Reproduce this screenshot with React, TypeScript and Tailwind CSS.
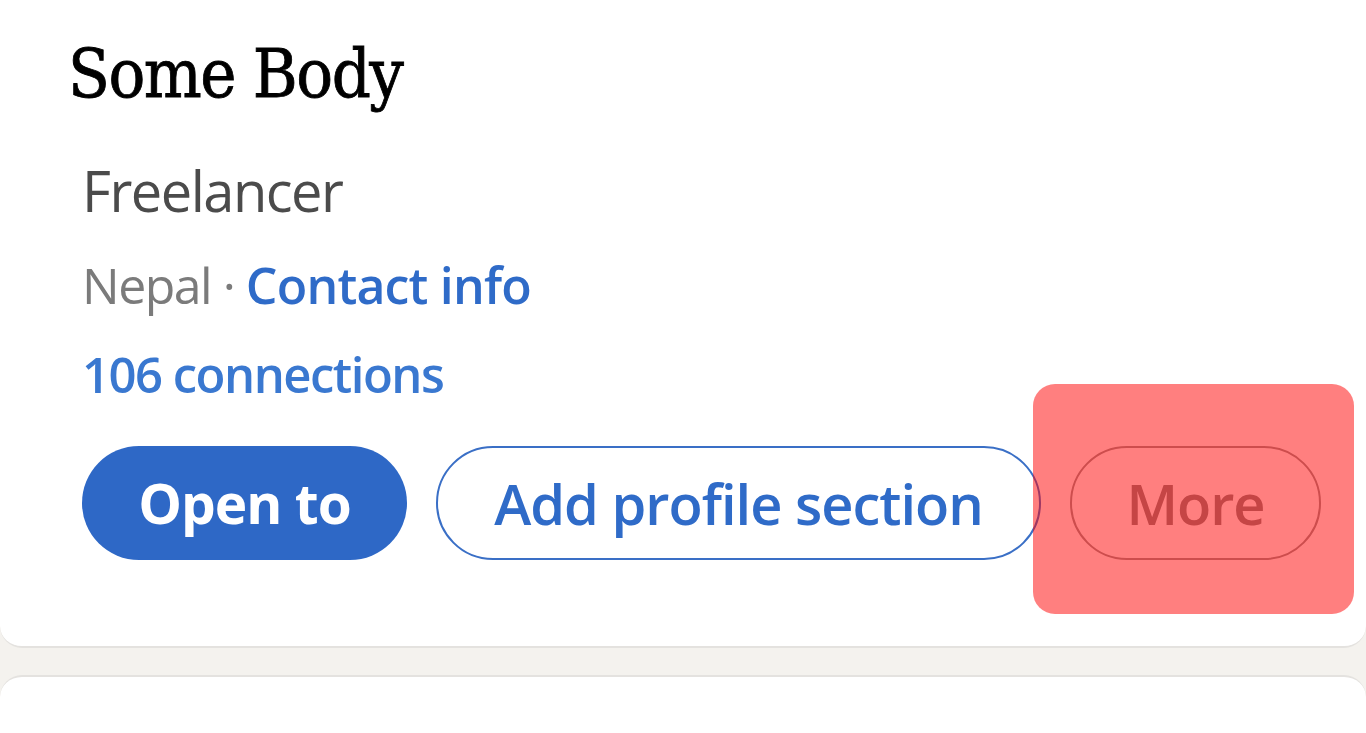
export default function App() {
  return (
    <div className="flex h-[733px] flex-col overflow-hidden bg-[#f4f2ee]">
      <section className="relative h-[648px] shrink-0 rounded-b-[22px] border-b-2 border-[#e4e2df] bg-white pl-[68px] pt-[40px]">
        <h1 className="font-['DejaVu_Serif_Condensed','DejaVu_Serif',serif] text-[68px] leading-none tracking-[-1.5px] text-black [-webkit-text-stroke:0.8px_black]">
          Some Body
        </h1>

        <div className="pl-[14px] font-['Open_Sans',sans-serif]">
          <p className="mt-[54px] text-[56px] leading-none tracking-[-1.5px] text-[#4b4b4b]">
            Freelancer
          </p>
          <p className="mt-[42px] text-[50px] leading-none tracking-[-1.5px] text-[#7b7b7b]">
            Nepal ·{" "}
            <span className="font-semibold tracking-[-0.8px] text-[#2f6bc8]">Contact info</span>
          </p>
          <p className="mt-[40px] text-[49px] font-semibold leading-none tracking-[-1.5px] text-[#3a78d0]">
            106 connections
          </p>

          <div className="mt-[47px] flex items-center gap-[29px]">
            <button className="flex h-[114px] w-[325px] items-center justify-center rounded-full bg-[#2e68c6] text-[55px] font-bold tracking-[-1px] text-white">
              Open to
            </button>
            <button className="flex h-[114px] w-[605px] items-center justify-center rounded-full border-2 border-[#3a6fc6] bg-white text-[56px] font-semibold tracking-[-1px] text-[#2f6bc8]">
              Add profile section
            </button>
            <button className="flex h-[114px] w-[251px] items-center justify-center rounded-full border-2 border-[#9a9a9a] bg-white text-[56px] font-semibold tracking-[-1px] text-[#8a8a8a]">
              More
            </button>
          </div>
        </div>

        <div className="absolute left-[1033px] top-[384px] h-[230px] w-[321px] rounded-[22px] bg-[#ff0000]/50" />
      </section>

      <div className="mt-[27px] flex-1 rounded-t-[22px] border-t-2 border-[#e4e2df] bg-white" />
    </div>
  );
}
